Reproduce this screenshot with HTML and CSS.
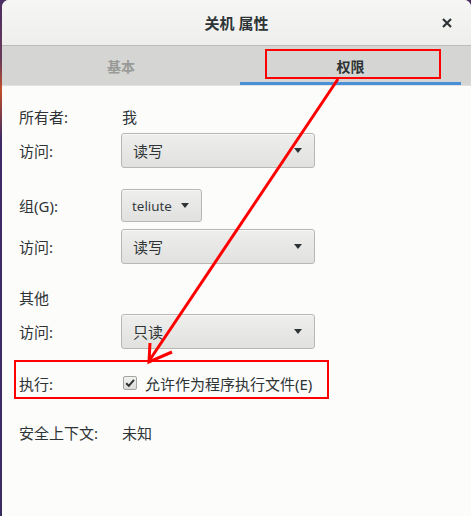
FILE: index.html
```html
<!DOCTYPE html>
<html lang="zh-CN">
<head>
<meta charset="utf-8">
<title>关机 属性</title>
<link rel="stylesheet" href="styles.css">
</head>
<body>
<div class="window">
  <header class="titlebar">
    <span></span>
    <span class="title">关机 属性</span>
    <span class="close">
      <svg width="10" height="10" viewBox="0 0 10 10"><path d="M1 1 L9 9 M9 1 L1 9" stroke="#2e3436" stroke-width="2.2" stroke-linecap="butt"/></svg>
    </span>
  </header>
  <nav class="tabs">
    <div class="tab">基本</div>
    <div class="tab active">权限</div>
  </nav>
  <main class="content">
    <div class="row text-row">
      <span class="label">所有者:</span>
      <span class="value">我</span>
    </div>
    <div class="row combo-row gap-s">
      <span class="label">访问:</span>
      <div class="combo wide"><span>读写</span><i class="tri"></i></div>
    </div>
    <div class="row combo-row small gap-l">
      <span class="label">组(G):</span>
      <div class="combo narrow"><span class="latin">teliute</span><i class="tri"></i></div>
    </div>
    <div class="row combo-row gap-m">
      <span class="label">访问:</span>
      <div class="combo wide"><span>读写</span><i class="tri"></i></div>
    </div>
    <div class="row text-row gap-l2">
      <span class="label">其他</span>
    </div>
    <div class="row combo-row gap-s">
      <span class="label">访问:</span>
      <div class="combo wide"><span>只读</span><i class="tri"></i></div>
    </div>
    <div class="row text-row gap-x">
      <span class="label">执行:</span>
      <label class="check">
        <span class="box">
          <svg width="12" height="12" viewBox="0 0 12 12"><path d="M2.2 6.2 L4.8 8.8 L10 2.8" fill="none" stroke="#2e3436" stroke-width="2"/></svg>
        </span>
        <span>允许作为程序执行文件(E)</span>
      </label>
    </div>
    <div class="row text-row gap-y">
      <span class="label">安全上下文:</span>
      <span class="value">未知</span>
    </div>
  </main>
  <svg class="annot" width="471" height="516" viewBox="0 0 471 516">
    <rect x="266" y="50" width="174" height="28" fill="none" stroke="#f00" stroke-width="2"/>
    <rect x="15" y="361" width="313" height="37" fill="none" stroke="#f00" stroke-width="2"/>
    <path d="M338 79 L149 361" stroke="#f00" stroke-width="3" fill="none"/>
    <path d="M150 343 L149 362 L172 352" stroke="#f00" stroke-width="3" fill="none"/>
  </svg>
</div>
</body>
</html>
```
FILE: styles.css
```css
html, body {
  margin: 0;
  padding: 0;
}
body {
  width: 471px;
  height: 516px;
  overflow: hidden;
  background: linear-gradient(180deg, #4a2e62 0px, #6a3a5a 60px, #c0502a 90px, #3e2a66 140px, #3b2b63 100%);
  display: flex;
  font-family: "Noto Sans", "Noto Sans CJK SC", sans-serif;
  color: #2e3436;
  font-size: 14px;
}
.window {
  position: relative;
  margin-left: 2px;
  width: 469px;
  height: 516px;
  background: #fcfcfb;
  border-radius: 7px 7px 0 0;
  overflow: hidden;
  display: flex;
  flex-direction: column;
}
.titlebar {
  height: 45px;
  flex: none;
  display: grid;
  grid-template-columns: 1fr auto 1fr;
  align-items: center;
  background: linear-gradient(180deg, #f6f6f5, #eeeeec);
  border-bottom: 1px solid #bcbcb8;
}
.title {
  font-weight: bold;
  font-size: 15px;
  color: #2e3436;
}
.close {
  justify-self: end;
  margin-right: 19px;
  display: flex;
  align-items: center;
  margin-top: 1px;
}
.tabs {
  height: 39px;
  flex: none;
  display: grid;
  grid-template-columns: 238px 221px;
  background: #d5d6d3;
  border-bottom: 1px solid #e2e2df;
}
.tab {
  display: flex;
  align-items: center;
  justify-content: center;
  font-weight: bold;
  font-size: 14px;
  color: #9a9b98;
  border-bottom: 3px solid transparent;
  padding-top: 3px;
}
.tab.active {
  color: #2e3436;
  border-bottom-color: #4a90d9;
}
.content {
  padding: 18px 0 0 17px;
  display: flex;
  flex-direction: column;
  font-size: 15px;
}
.row {
  display: grid;
  grid-template-columns: 102px auto;
  align-items: center;
}
.text-row { height: 24px; }
.combo-row { height: 35px; }
.combo-row.small { height: 33px; }
.gap-s { margin-top: 5px; }
.gap-l { margin-top: 21px; }
.gap-m { margin-top: 7px; }
.gap-l2 { margin-top: 21px; }
.gap-x { margin-top: 22px; }
.gap-y { margin-top: 25px; }
.label {
  color: #2e3436;
}
.value {
  padding-left: 1px;
}
.combo {
  box-sizing: border-box;
  height: 100%;
  display: flex;
  align-items: center;
  justify-content: space-between;
  border: 1px solid #b7b8b3;
  border-radius: 3px;
  background: linear-gradient(180deg, #eeeeec, #e1e2df);
  box-shadow: inset 0 1px #f8f8f7;
}
.combo.wide {
  width: 194px;
  padding: 0 12px 0 11px;
}
.combo.narrow {
  width: 81px;
  padding: 0 12px 0 10px;
}
.latin {
  font-family: "Open Sans", "Noto Sans", sans-serif;
  font-size: 13.5px;
}
.tri {
  width: 0;
  height: 0;
  border-left: 4px solid transparent;
  border-right: 4px solid transparent;
  border-top: 5px solid #2e3436;
}
.check {
  display: flex;
  align-items: center;
  gap: 8px;
  padding-left: 2px;
}
.box {
  box-sizing: border-box;
  width: 14px;
  height: 14px;
  border: 1px solid #a4a5a1;
  border-radius: 2px;
  background: linear-gradient(180deg, #f2f2f0, #dcdcd9);
  display: flex;
  align-items: center;
  justify-content: center;
}
.annot {
  position: absolute;
  left: -2px;
  top: 0;
  pointer-events: none;
}
```
